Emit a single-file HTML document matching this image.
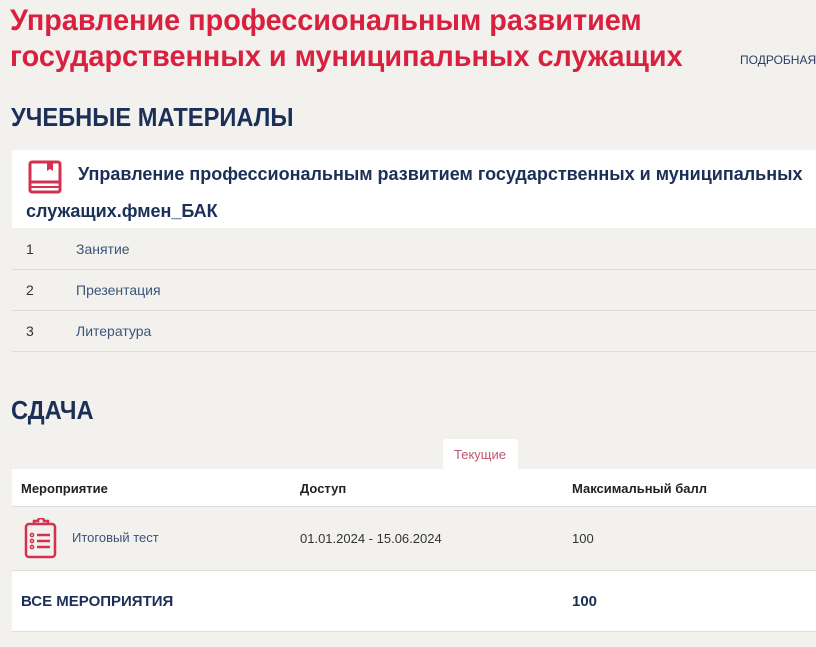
<!DOCTYPE html>
<html><head><meta charset="utf-8"><style>
body{margin:0;width:816px;height:647px;overflow:hidden;background:#f2f1ee;font-family:"Liberation Sans",sans-serif;position:relative}
.a{position:absolute;white-space:nowrap}
.t{color:#d9203f;font-size:30px;line-height:35px;font-weight:bold;transform:scaleX(0.96);transform-origin:0 0}
.h{color:#1b2f57;font-size:26px;font-weight:bold;transform:scaleX(0.91);transform-origin:0 0}
.w{position:absolute;background:#fff}
.ln{position:absolute;left:12px;right:0;height:1px;background:#dcdcdc}
.n{font-size:14px;color:#333}
.l{font-size:14px;color:#3b5577}
.b{font-size:13px;color:#222;font-weight:bold}
</style></head><body>
<div class="a t" style="left:10px;top:3px">Управление профессиональным развитием</div>
<div class="a t" style="left:10px;top:39px">государственных и муниципальных служащих</div>
<div class="a" style="left:740px;top:53px;font-size:12px;color:#2a3d66">ПОДРОБНАЯ</div>
<div class="a h" style="left:11px;top:102px">УЧЕБНЫЕ МАТЕРИАЛЫ</div>
<div class="w" style="left:12px;top:150px;right:0;height:78px"></div>
<svg class="a" style="left:28px;top:160px" width="34" height="34" viewBox="0 0 34 34"><rect x="2" y="2" width="30" height="30" rx="2" fill="none" stroke="#d4314f" stroke-width="3"/><line x1="2" y1="22" x2="32" y2="22" stroke="#d4314f" stroke-width="3"/><line x1="2" y1="27" x2="32" y2="27" stroke="#d4314f" stroke-width="2"/><path d="M19 2v9l3-2 3 2V2z" fill="#d4314f"/></svg>
<div class="a" style="left:78px;top:164px;font-size:18px;font-weight:bold;color:#1b2f57">Управление профессиональным развитием государственных и муниципальных</div>
<div class="a" style="left:26px;top:201px;font-size:18px;font-weight:bold;color:#1b2f57">служащих.фмен_БАК</div>
<div class="ln" style="top:269px"></div><div class="ln" style="top:310px"></div><div class="ln" style="top:351px"></div>
<div class="a n" style="left:26px;top:241px">1</div><div class="a l" style="left:76px;top:241px">Занятие</div>
<div class="a n" style="left:26px;top:282px">2</div><div class="a l" style="left:76px;top:282px">Презентация</div>
<div class="a n" style="left:26px;top:323px">3</div><div class="a l" style="left:76px;top:323px">Литература</div>
<div class="a h" style="left:11px;top:395px">СДАЧА</div>
<div class="w" style="left:443px;top:439px;width:75px;height:31px;border-radius:3px 3px 0 0"></div>
<div class="a" style="left:454px;top:447px;font-size:13px;color:#c25670">Текущие</div>
<div class="w" style="left:12px;top:469px;right:0;height:37px;border-bottom:1px solid #ddd"></div>
<div class="a b" style="left:21px;top:481px">Мероприятие</div>
<div class="a b" style="left:300px;top:481px">Доступ</div>
<div class="a b" style="left:572px;top:481px">Максимальный балл</div>
<svg class="a" style="left:24px;top:518px" width="34" height="42" viewBox="0 0 34 42"><rect x="2" y="6" width="29" height="33" rx="3" fill="none" stroke="#d4314f" stroke-width="2.5"/><path d="M10 6V3h4a3 3 0 0 1 6 0h4v3" fill="none" stroke="#d4314f" stroke-width="2.5"/><g fill="none" stroke="#d4314f" stroke-width="1.5"><circle cx="8" cy="17" r="1.6"/><circle cx="8" cy="23" r="1.6"/><circle cx="8" cy="29" r="1.6"/></g><g stroke="#d4314f" stroke-width="2.5"><line x1="13" y1="17" x2="26" y2="17"/><line x1="13" y1="23" x2="26" y2="23"/><line x1="13" y1="29" x2="26" y2="29"/></g></svg>
<div class="a" style="left:72px;top:530px;font-size:13px;color:#3b5577">Итоговый тест</div>
<div class="a" style="left:300px;top:531px;font-size:13px;color:#333">01.01.2024 - 15.06.2024</div>
<div class="a" style="left:572px;top:531px;font-size:13px;color:#333">100</div>
<div class="w" style="left:12px;top:570px;right:0;height:60px;border-top:1px solid #ddd;border-bottom:1px solid #ddd"></div>
<div class="a" style="left:21px;top:593px;font-size:15px;font-weight:bold;color:#1b2f57">ВСЕ МЕРОПРИЯТИЯ</div>
<div class="a" style="left:572px;top:593px;font-size:15px;font-weight:bold;color:#1b2f57">100</div>
</body></html>
